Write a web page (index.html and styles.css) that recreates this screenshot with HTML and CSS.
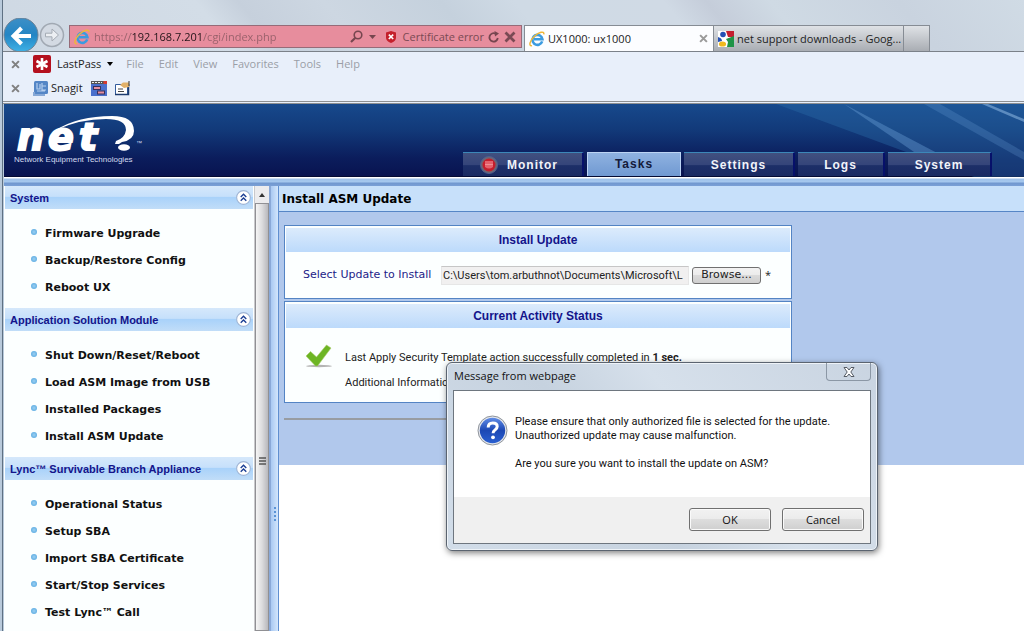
FILE: index.html
```html
<!DOCTYPE html>
<html lang="en">
<head>
    <meta charset="UTF-8">
    <meta name="viewport" content="width=device-width, initial-scale=1.0">
    <title>UX1000: ux1000</title>
    <link rel="stylesheet" href="styles.css">
</head>
<body>
    <svg class="defs" width="0" height="0">
        <defs>
            <linearGradient id="blue" x1="0" y1="0" x2="0" y2="1">
                <stop offset="0" stop-color="#3d8fc6"/>
                <stop offset=".5" stop-color="#2385c4"/>
                <stop offset="1" stop-color="#3fb2e6"/>
            </linearGradient>
            <linearGradient id="ball" x1="0" y1="0" x2="0" y2="1">
                <stop offset="0" stop-color="#5f8be6"/>
                <stop offset=".5" stop-color="#1c48b4"/>
                <stop offset="1" stop-color="#2a5fd0"/>
            </linearGradient>
        </defs>
        <symbol id="ie" viewBox="0 0 16 16">
            <path d="M13.2 10.4A5 5 0 1 1 13.4 8.2H5" fill="none" stroke="#3b9be0" stroke-width="2.6"/>
            <path d="M3 14.6C-.6 15.6.6 9.6 5.4 5.2 9.8 1.2 15.4-.6 14.8 3.4" fill="none" stroke="#efb73a" stroke-width="1.5"/>
        </symbol>
        <symbol id="cross" viewBox="0 0 8 8">
            <path d="M1 1l6 6M7 1L1 7" stroke="currentColor" stroke-width="1.8"/>
        </symbol>
        <symbol id="chevrons" viewBox="0 0 14 14">
            <circle cx="7" cy="7" r="6.4" fill="#fff" stroke="#9fb4d4"/>
            <path d="M4.4 6.6 7 4l2.6 2.6M4.4 10 7 7.4 9.6 10" fill="none" stroke="#1c3f94" stroke-width="1.3"/>
        </symbol>
    </svg>

    <div class="window">
        <!-- browser frame -->
        <div class="glass">
            <div class="history">
                <button class="back" aria-label="Back">
                    <svg width="36" height="34" viewBox="0 0 36 34">
                        <circle cx="18" cy="17" r="17" fill="url(#blue)" stroke="#6c8296"/>
                        <path d="M28 18H11M18.5 10 10.500 18l8 8" fill="none" stroke="#fff" stroke-width="4"/>
                    </svg>
                </button>
                <button class="forward" aria-label="Forward">
                    <svg width="26" height="26" viewBox="0 0 26 26">
                        <circle cx="13" cy="13" r="11.5" fill="#d3dae3" stroke="#a1a9b3" stroke-width="1.5"/>
                        <path d="M6.5 11.2H13V7l6.500 6-6.500 6v-4.200H6.500z" fill="#eceff3" stroke="#a4abb4"/>
                    </svg>
                </button>
            </div>
            <form class="address">
                <svg width="16" height="16"><use href="#ie"/></svg>
                <input type="text" class="url" aria-label="Address" value="https://192.168.7.201/cgi/index.php">
                <button type="button" aria-label="Search">
                    <svg width="26" height="14" viewBox="0 0 26 14">
                        <circle cx="8" cy="5" r="3.8" fill="none" stroke="#76464f" stroke-width="1.6"/>
                        <path d="M5.4 7.8 1 12" stroke="#76464f" stroke-width="2.2"/>
                        <path d="M19 5h7l-3.500 4z" fill="#76464f"/>
                    </svg>
                </button>
                <button type="button" class="cert">
                    <svg width="12" height="12" viewBox="0 0 12 12">
                        <path d="M6 0 11 1.500v5Q11 10 6 12 1 10 1 6.500v-5z" fill="#c4202c"/>
                        <path d="M3.800 3.600l4.400 4.400M8.200 3.600 3.800 8" stroke="#fff" stroke-width="1.6"/>
                    </svg>
                    Certificate error
                </button>
                <button type="button" aria-label="Refresh">
                    <svg width="12" height="12" viewBox="0 0 12 12">
                        <path d="M9.800 7A4.200 4.200 0 1 1 7.500 2.600" fill="none" stroke="#76464f" stroke-width="1.8"/>
                        <path d="M6.500 0 11 2.500 7 5.500z" fill="#76464f"/>
                    </svg>
                </button>
                <button type="button" aria-label="Stop"><svg width="12" height="12"><use href="#cross"/></svg></button>
            </form>
            <div class="pages">
                <div class="page open">
                    <svg width="16" height="16"><use href="#ie"/></svg>
                    <span>UX1000: ux1000</span>
                    <button aria-label="Close tab"><svg width="9" height="9"><use href="#cross"/></svg></button>
                </div>
                <div class="page">
                    <svg width="16" height="16" viewBox="0 0 16 16">
                        <path d="M0 0h16v16H0z" fill="#fff"/>
                        <path d="M8 0h8v6H10z" fill="#c41f30"/>
                        <path d="M16 5v11H9l1-5-2-3z" fill="#1f9447"/>
                        <circle cx="5" cy="3.500" r="2.800" fill="#2450b4"/>
                        <path d="M0 6q4 1 4 4l-4 1z" fill="#2450b4"/>
                        <ellipse cx="4.500" cy="13" rx="3.600" ry="2.600" fill="#f0b91e"/>
                    </svg>
                    <span>net support downloads - Goog...</span>
                </div>
                <button class="page new" aria-label="New tab"></button>
            </div>
        </div>

        <div class="toolbars">
            <div class="toolbar">
                <button class="close" aria-label="Close toolbar"><svg width="9" height="9"><use href="#cross"/></svg></button>
                <button class="lastpass">
                    <svg width="18" height="18" viewBox="0 0 18 18">
                        <rect width="18" height="18" rx="2" fill="#b4101e"/>
                        <path d="M9 3v12M3.500 6l11 6M14.500 6l-11 6" stroke="#fff" stroke-width="2.6"/>
                    </svg>
                    LastPass
                    <svg width="6" height="4" viewBox="0 0 6 4"><path d="M0 0h6L3 4z"/></svg>
                </button>
                <nav class="menu">
                    <button>File</button>
                    <button>Edit</button>
                    <button>View</button>
                    <button>Favorites</button>
                    <button>Tools</button>
                    <button>Help</button>
                </nav>
            </div>
            <div class="toolbar">
                <button class="close" aria-label="Close toolbar"><svg width="9" height="9"><use href="#cross"/></svg></button>
                <button class="snagit">
                    <svg width="15" height="15" viewBox="0 0 15 15">
                        <rect x="1" width="14" height="13" rx="1.500" fill="#5486c6"/>
                        <path d="M1 11v3h11" fill="none" stroke="#86a8d6" stroke-width="2"/>
                        <path d="M4 2v6h3V3M9 2v7h4M9 5h4M4 10h8" fill="none" stroke="#b6cfee" stroke-width="1.2"/>
                    </svg>
                    Snagit
                </button>
                <button aria-label="Capture">
                    <svg width="16" height="15" viewBox="0 0 16 15">
                        <path d="M0 0h16v15H0z" fill="#4a70cc"/>
                        <path d="M0 0h16v3H0z" fill="#555"/>
                        <path d="M1 1.500h10" stroke="#eee" stroke-dasharray="2 1"/>
                        <path d="M12.500 0H16v3h-3.500z" fill="#d43a30"/>
                        <rect x="2.500" y="5.500" width="7" height="3" fill="#e58fa0" stroke="#37305c"/>
                        <rect x="6.500" y="10" width="7" height="3" fill="#e58fa0" stroke="#37305c"/>
                    </svg>
                </button>
                <button aria-label="Edit">
                    <svg width="15" height="15" viewBox="0 0 15 15">
                        <path d="M.5 3.500h12v10H.5z" fill="#fff" stroke="#315b9c"/>
                        <path d="M0 13.500h13.500V3" fill="none" stroke="#1d3c70" stroke-width="1.5"/>
                        <path d="M3 8h5M3 10.500h6" stroke="#444"/>
                        <path d="M5 4l3-2.500h6V6L9 7z" fill="#e2b169"/>
                        <path d="M14 0v5" stroke="#333"/>
                    </svg>
                </button>
            </div>
        </div>

        <!-- device web ui -->
        <header class="banner">
            <svg class="rays" width="300" height="73" viewBox="0 0 300 73">
                <path d="M52 0H300v73H250z" fill="#2b6ba8" opacity=".4"/>
                <path d="M120 0l95 50h-22z" fill="#6ba0d6" opacity=".4"/>
                <path d="M200 0l100 56v-8L216 0z" fill="#6ba0d6" opacity=".25"/>
                <path d="M258 0l42 18v-3L264 0z" fill="#9cc4ec" opacity=".5"/>
            </svg>
            <div class="logo">
                <svg width="132" height="38" viewBox="0 0 132 38">
                    <text class="logo-name" x="3 34 65" y="34">net</text>
                    <path d="M42 14Q64 0 98 0q22 0 22 15 0 9-12 11l-3 2h-4l1-3q9-3 10-11 0-11-20-11-26 0-50 11z" fill="#fff"/>
                    <ellipse cx="110" cy="31.500" rx="6" ry="3.300" fill="#fff"/>
                    <text class="tm" x="122" y="29">™</text>
                </svg>
                <span>Network Equipment Technologies</span>
            </div>
            <nav class="tabs">
                <a href="#" class="monitor">
                    <svg width="20" height="20" viewBox="0 0 20 20">
                        <circle cx="10" cy="10" r="8.500" fill="#6f6572" stroke="#4c5f92"/>
                        <circle cx="10" cy="10" r="6.500" fill="#c41d2c"/>
                        <path d="M6 6h8v6q-4 3-8 0z" fill="#e4606b"/>
                        <path d="M6 9.500h8" stroke="#f08c92"/>
                    </svg>
                    Monitor
                </a>
                <a href="#" class="tasks">Tasks</a>
                <a href="#" class="settings">Settings</a>
                <a href="#" class="logs">Logs</a>
                <a href="#" class="system">System</a>
            </nav>
        </header>

        <div class="main">
            <aside class="sidebar">
                <div class="sections">
                    <section>
                        <h2>System <button aria-label="Collapse"><svg width="15" height="15"><use href="#chevrons"/></svg></button></h2>
                        <ul>
                            <li><a href="#">Firmware Upgrade</a></li>
                            <li><a href="#">Backup/Restore Config</a></li>
                            <li><a href="#">Reboot UX</a></li>
                        </ul>
                    </section>
                    <section>
                        <h2>Application Solution Module <button aria-label="Collapse"><svg width="15" height="15"><use href="#chevrons"/></svg></button></h2>
                        <ul>
                            <li><a href="#">Shut Down/Reset/Reboot</a></li>
                            <li><a href="#">Load ASM Image from USB</a></li>
                            <li><a href="#">Installed Packages</a></li>
                            <li><a href="#">Install ASM Update</a></li>
                        </ul>
                    </section>
                    <section>
                        <h2>Lync™ Survivable Branch Appliance <button aria-label="Collapse"><svg width="15" height="15"><use href="#chevrons"/></svg></button></h2>
                        <ul>
                            <li><a href="#">Operational Status</a></li>
                            <li><a href="#">Setup SBA</a></li>
                            <li><a href="#">Import SBA Certificate</a></li>
                            <li><a href="#">Start/Stop Services</a></li>
                            <li><a href="#">Test Lync™ Call</a></li>
                        </ul>
                    </section>
                </div>
                <div class="scrollbar">
                    <svg width="6" height="4" viewBox="0 0 6 4"><path d="M0 4h6L3 0z" fill="#333"/></svg>
                    <div class="thumb"><svg width="7" height="9" viewBox="0 0 7 9"><path d="M0 1h7M0 4h7M0 7h7" stroke="#555" stroke-width="1.5"/></svg></div>
                </div>
            </aside>
            <div class="splitter">
                <svg width="4" height="14" viewBox="0 0 4 14"><path d="M2 0v14" stroke="#5b93d6" stroke-width="2" stroke-dasharray="2 2"/></svg>
            </div>
            <main class="content">
                <h1>Install ASM Update</h1>
                <div class="body">
                    <form class="panel">
                        <h3>Install Update</h3>
                        <div class="row">
                            <label for="file">Select Update to Install</label>
                            <input type="text" id="file" value="C:\Users\tom.arbuthnot\Documents\Microsoft\L" readonly>
                            <button type="button">Browse...</button>
                            <span>*</span>
                        </div>
                    </form>
                    <div class="panel">
                        <h3>Current Activity Status</h3>
                        <div class="status">
                            <svg width="28" height="24" viewBox="0 0 28 24">
                                <ellipse cx="14" cy="22" rx="13" ry="1.200" fill="#b4b4b4"/>
                                <path d="M1 12l4.500-4.500 6 5.500L21.500 1 26 4 12.500 22h-2z" fill="#6db524" stroke="#a8c96a" stroke-width=".6"/>
                            </svg>
                            <div>
                                <p>Last Apply Security Template action successfully completed in <b>1 sec.</b></p>
                                <p>Additional Information</p>
                            </div>
                        </div>
                    </div>
                    <hr>
                </div>
            </main>
        </div>
    </div>

    <div class="dialog" role="dialog" aria-labelledby="dialog-title">
        <div class="dialog-bar">
            <span id="dialog-title">Message from webpage</span>
            <button aria-label="Close">
                <svg width="12" height="10" viewBox="0 0 12 10"><path d="M1 .5h3L6 3l2-2.500h3L7.800 5l3.200 4.500H8L6 7 4 9.500H1L4.200 5z" fill="#fff" stroke="#555b64"/></svg>
            </button>
        </div>
        <div class="dialog-box">
            <div class="message">
                <svg width="31" height="31" viewBox="0 0 31 31">
                    <circle cx="15.500" cy="15.500" r="14.500" fill="#e6e8ec" stroke="#8d939b"/>
                    <circle cx="15.500" cy="15.500" r="12.700" fill="url(#ball)"/>
                    <path d="M11.200 12.500q0-4.500 4.600-4.500 4.400 0 4.400 3.600 0 2-2.200 3.400-1.900 1.200-1.900 3.200" fill="none" stroke="#fff" stroke-width="3"/>
                    <circle cx="16" cy="22.300" r="1.900" fill="#fff"/>
                </svg>
                <div>
                    <p>Please ensure that only authorized file is selected for the update.<br>Unauthorized update may cause malfunction.</p>
                    <p>Are you sure you want to install the update on ASM?</p>
                </div>
            </div>
            <div class="actions">
                <button>OK</button>
                <button>Cancel</button>
            </div>
        </div>
    </div>
</body>
</html>
```

FILE: styles.css
```css
* {
    box-sizing: border-box;
}
body {
    margin: 0;
    height: 100vh;
    overflow: hidden;
    background: #b9cadb;
    font: 11px/14px "Open Sans", "Noto Sans", sans-serif;
    color: #222;
}
h1, h2, h3, p, ul {
    margin: 0;
    padding: 0;
}
a {
    color: inherit;
    text-decoration: none;
}
button, input {
    font: inherit;
    color: inherit;
}
button {
    display: flex;
    align-items: center;
    padding: 0;
    border: 0;
    background: none;
}
svg {
    display: block;
    flex: none;
}
.defs {
    position: absolute;
}
.window {
    display: flex;
    flex-direction: column;
    height: 100%;
    margin-left: 2px;
    border-left: 1px solid #5f7183;
}

/* browser frame */
.glass {
    display: flex;
    align-items: flex-end;
    height: 52px;
    border-bottom: 1px solid #7b8189;
    background: linear-gradient(50deg, #ced8e3 0%, #d3dde7 22%, #c6d0dc 26%, #cdd7e2 34%, #c5d1dd 45%, #cfdae5 52%, #d0dae5 66%, #c5cdda 70%, #cfdae4 76%, #c9d3df 88%, #d0dbe5 100%);
}
.history {
    display: flex;
    align-items: center;
    width: 66px;
    height: 33px;
    overflow: hidden;
}
.back, .forward {
    flex: none;
}
.address {
    display: flex;
    align-items: center;
    gap: 4px;
    width: 453px;
    height: 23px;
    margin-bottom: 3px;
    padding: 0 5px 0 4px;
    border: 1px solid #966b78;
    background: #e78d9d;
    color: #7a4a54;
}
.url {
    flex: 1;
    min-width: 0;
    padding: 0;
    border: 0;
    /* host part darker than the rest of the address */
    color: transparent;
    background: linear-gradient(90deg, #97606a 37px, #221418 37px, #221418 109px, #97606a 109px);
    background-clip: text;
    -webkit-background-clip: text;
}
.cert {
    gap: 6px;
    margin-left: 5px;
}
.pages {
    display: flex;
    margin-left: 2px;
}
.page {
    display: flex;
    align-items: center;
    gap: 3px;
    width: 190px;
    height: 26px;
    padding-left: 4px;
    border: 1px solid #868c94;
    border-width: 1px 1px 0 0;
    background: linear-gradient(#dfe2e6, #a9adb3);
    white-space: nowrap;
}
.page.open {
    border-left-width: 1px;
    background: #fcfdff;
}
.page.open button {
    margin: 0 5px 0 auto;
    color: #9a9a9a;
}
.page.new {
    width: 26px;
}
.toolbars {
    height: 52px;
    border-bottom: 3px double #8d9093;
    background: #e8effa;
}
.toolbar {
    display: flex;
    align-items: center;
    gap: 8px;
    height: 24px;
    padding-left: 8px;
}
.close {
    margin-right: 5px;
    color: #808080;
}
.lastpass {
    gap: 6px;
}
.snagit {
    gap: 3px;
}
.menu {
    display: flex;
    gap: 15px;
    margin-left: 5px;
    color: #9a9ea6;
}

/* banner */
.banner {
    position: relative;
    display: flex;
    justify-content: space-between;
    height: 73px;
    margin-left: 1px;
    border-bottom: 1px solid #040b34;
    background: linear-gradient(#17498c, #123a7a 35%, #0b1d5c 75%, #081350);
}
.rays {
    position: absolute;
    top: 0;
    right: 0;
}
.logo {
    padding: 12px 0 0 10px;
    color: #d3dbef;
    font: 8px/12px "Liberation Sans", Arial, sans-serif;
}
.logo svg {
    overflow: visible;
}
.logo-name {
    font: italic bold 38px "DejaVu Sans", sans-serif;
    fill: #fff;
    stroke: #fff;
    stroke-width: 2px;
}
.tm {
    font: 6px "Liberation Sans", sans-serif;
    fill: #d3dbef;
}
.tabs {
    position: relative;
    display: flex;
    align-items: flex-end;
    gap: 3px;
    margin-right: 32px;
    color: #f2f4fa;
    font: bold 12px/14px "Liberation Sans", Arial, sans-serif;
    letter-spacing: 1px;
}
.tabs a {
    display: flex;
    align-items: center;
    justify-content: center;
    height: 24px;
    border-top: 1px solid #3c87b8;
    border-right: 2px solid #06106a;
    background: linear-gradient(#41507f, #35457a 50%, #1d2f68 55%, #192a62);
}
.tabs .monitor {
    gap: 8px;
    width: 121px;
    padding-right: 8px;
}
.tabs .tasks {
    width: 94px;
    padding-bottom: 2px;
    border: 1px solid #bcd4f4;
    border-bottom: 0;
    background: linear-gradient(#8fb2e0, #7099d2);
    color: #141a3a;
}
.tabs .settings {
    width: 111px;
}
.tabs .logs {
    width: 87px;
}
.tabs .system {
    width: 104px;
}

/* page */
.main {
    display: flex;
    flex: 1;
    min-height: 0;
    margin-left: 1px;
    padding-top: 9px;
    background: linear-gradient(#fff 1px, #9fc2ea 2px, #a6c8ee 5px, #7097cf 6px, #7ba0d6 9px, #fff 9px);
}
.sidebar {
    display: flex;
    width: 265px;
    background: #fcffff;
}
.sections {
    flex: 1;
    padding: 0 1px;
    overflow: hidden;
}
h2 {
    display: flex;
    align-items: center;
    justify-content: space-between;
    height: 23px;
    padding: 0 2px 0 5px;
    background: linear-gradient(#d5e8fb, #c6e0fb 45%, #a9d2fa 50%, #c1ddf8);
    color: #14148a;
    font: bold 11px/14px "Liberation Sans", Arial, sans-serif;
}
.sections ul {
    padding: 11px 0 7px 26px;
    list-style: none;
}
.sections li {
    display: flex;
    align-items: center;
    gap: 8px;
    height: 27px;
    color: #111;
    font: bold 11px/14px "DejaVu Sans", Verdana, sans-serif;
}
.sections li::before {
    content: "";
    width: 6px;
    height: 6px;
    margin-bottom: 3px;
    border-radius: 50%;
    background: radial-gradient(#9bd0f2, #4ca2de);
}
.scrollbar {
    display: flex;
    flex-direction: column;
    align-items: center;
    width: 15px;
    border-left: 1px solid #c9c9cc;
    background: #ececee;
}
.scrollbar > svg {
    margin: 7px 0 6px;
}
.thumb {
    display: flex;
    flex: 1;
    justify-content: center;
    align-self: stretch;
    padding-top: 253px;
    border: 1px solid #909094;
    background: linear-gradient(90deg, #f5f5f5, #dcdcde 50%, #b8b8bc);
}
.splitter {
    display: flex;
    justify-content: center;
    width: 10px;
    padding-top: 321px;
    border-left: 2px solid #8aa9d8;
    border-right: 1px solid #5f8fd0;
    background: linear-gradient(90deg, #a9c9f2, #d3e6fc);
}
.content {
    flex: 1;
    min-width: 0;
}
h1 {
    height: 26px;
    padding: 0 3px;
    border-bottom: 1px solid #5686c6;
    background: #c7e0fa;
    color: #000;
    font: bold 12px/26px "DejaVu Sans", Verdana, sans-serif;
}
.body {
    padding: 13px 5px 45px;
    background: #b1c8ec;
}
.panel {
    width: 508px;
    margin-bottom: 2px;
    padding: 2px 1px;
    border: 1px solid #5484c4;
    background: #fcffff;
}
h3 {
    height: 24px;
    background: linear-gradient(#dcebfc, #bcdafb);
    color: #14148a;
    font: bold 12px/24px "Liberation Sans", Arial, sans-serif;
    text-align: center;
}
.row {
    display: flex;
    align-items: center;
    height: 44px;
    padding: 2px 0 0 17px;
}
.row label {
    width: 138px;
    color: #1c1c88;
    font: 11px/16px "DejaVu Sans", Verdana, sans-serif;
}
.row input {
    width: 248px;
    height: 19px;
    margin-right: 3px;
    padding: 0 1px;
    border: 1px solid #e6e6e6;
    border-top-color: #c6c6c6;
    background: #f1f0f0;
    font-family: Roboto, sans-serif;
}
.row button {
    justify-content: center;
    width: 69px;
    height: 17px;
    margin-right: 4px;
    border: 1px solid #707070;
    border-radius: 3px;
    background: linear-gradient(#f2f2f2, #ebebeb 50%, #dadada 50%, #cfcfcf);
    font: 11px/16px "DejaVu Sans", Verdana, sans-serif;
}
.status {
    display: flex;
    gap: 12px;
    height: 72px;
    padding: 16px 0 0 19px;
    font-family: Roboto, sans-serif;
}
.status p {
    margin: 7px 0 11px;
    white-space: nowrap;
}
.status p + p {
    margin-top: 0;
}
hr {
    width: 508px;
    height: 2px;
    margin: 15px 0 0;
    border: 0;
    background: #989ca2;
}

/* message box */
.dialog {
    position: absolute;
    top: 362px;
    left: 446px;
    width: 432px;
    padding: 0 6px 6px;
    border: 1px solid #5b6470;
    border-radius: 6px;
    background: linear-gradient(50deg, #d2dde9, #c6d2df 40%, #d6e0eb 60%, #c9d4e1);
    box-shadow: inset 0 0 0 1px #eef3f8, 1px 2px 6px rgba(0, 0, 0, .5);
    color: #111;
}
.dialog-bar {
    display: flex;
    justify-content: space-between;
    height: 27px;
    padding-left: 1px;
    line-height: 26px;
}
.dialog-bar button {
    justify-content: center;
    width: 45px;
    height: 18px;
    border: 1px solid #8b97a5;
    border-top: 0;
    border-radius: 0 0 4px 4px;
}
.dialog-box {
    border: 1px solid #6e767f;
    background: #fff;
}
.message {
    display: flex;
    gap: 7px;
    height: 106px;
    padding: 24px 0 0 23px;
    font-family: Roboto, sans-serif;
}
.message p {
    margin-bottom: 14px;
    white-space: nowrap;
}
.actions {
    display: flex;
    justify-content: flex-end;
    gap: 11px;
    padding: 11px 6px 12px;
    background: #f0f0f0;
}
.actions button {
    justify-content: center;
    width: 82px;
    height: 23px;
    border: 1px solid #707070;
    border-radius: 3px;
    background: linear-gradient(#f2f2f2, #ebebeb 50%, #dddddd 50%, #cfcfcf);
    box-shadow: inset 0 0 0 1px #fafafa;
}
```
